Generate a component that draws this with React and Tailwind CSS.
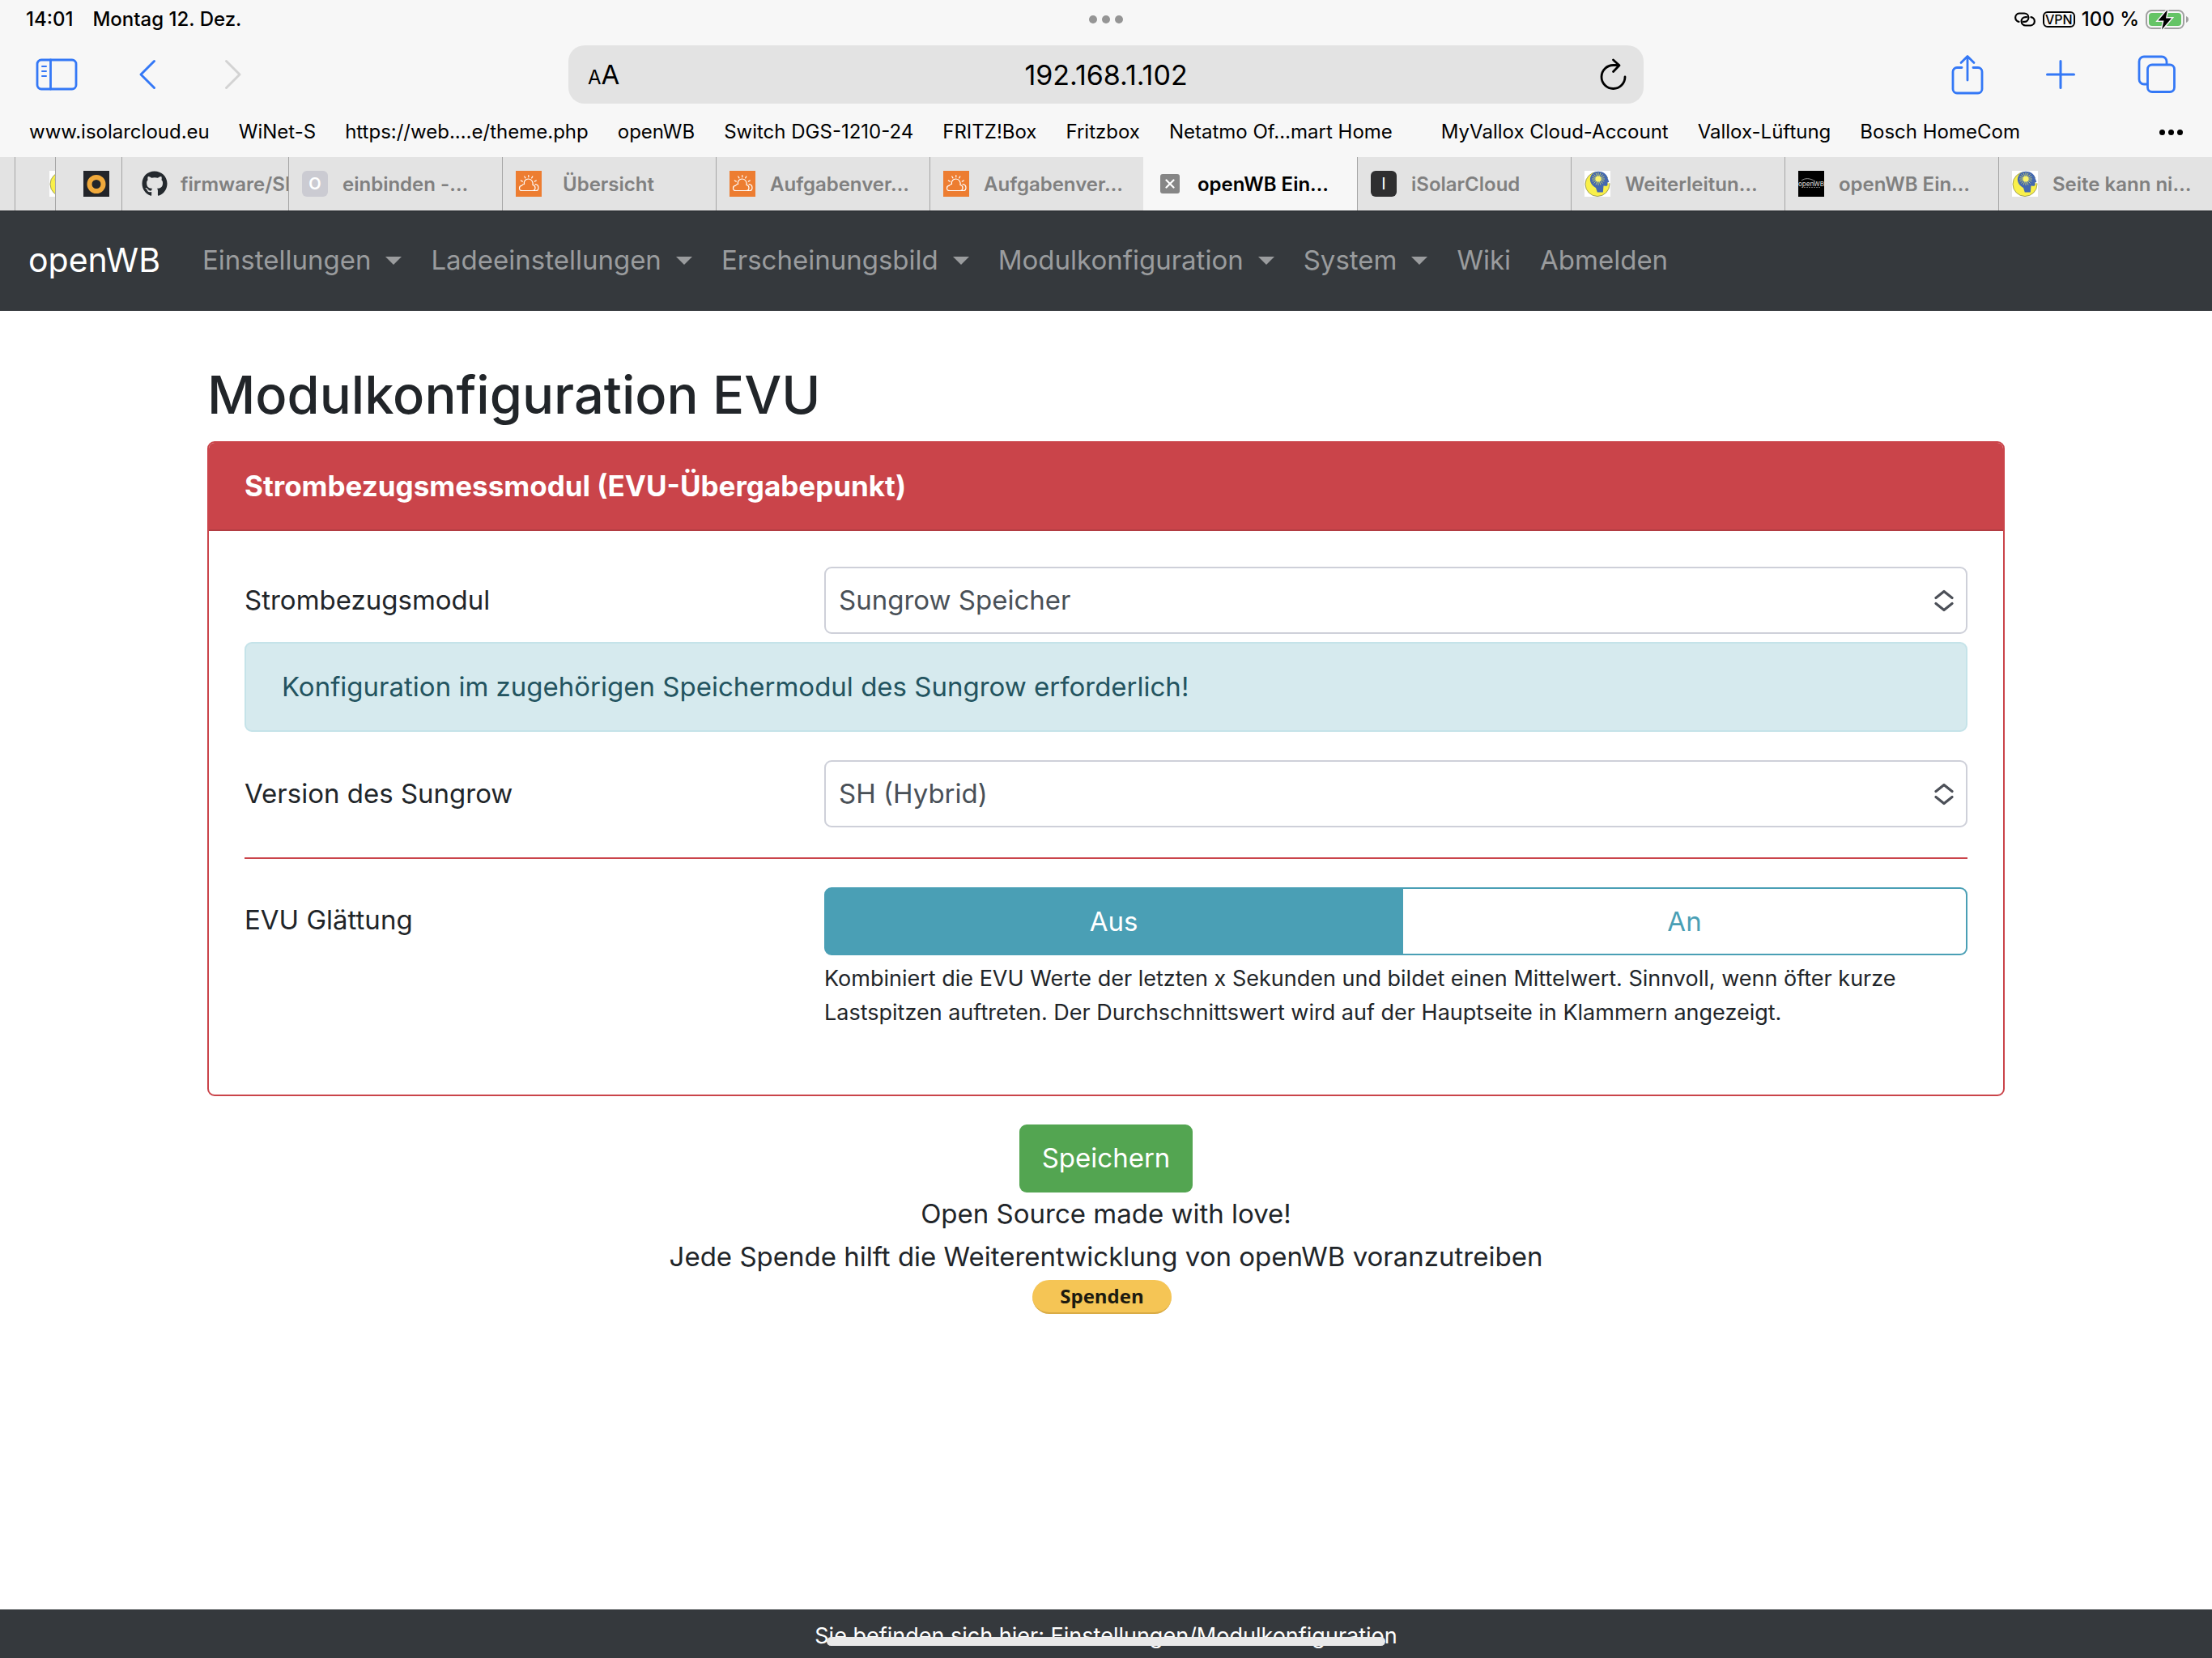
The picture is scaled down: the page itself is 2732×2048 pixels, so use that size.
import { useState } from "react";
import { FaGithub } from "react-icons/fa";

const bookmarks = [
  { label: "www.isolarcloud.eu" },
  { label: "WiNet-S" },
  { label: "https://web.…e/theme.php" },
  { label: "openWB" },
  { label: "Switch DGS-1210-24" },
  { label: "FRITZ!Box" },
  { label: "Fritzbox" },
  { label: "Netatmo Of…mart Home", wide: true },
  { label: "MyVallox Cloud-Account" },
  { label: "Vallox-Lüftung" },
  { label: "Bosch HomeCom" },
];

const menu = [
  { label: "Einstellungen", dropdown: true },
  { label: "Ladeeinstellungen", dropdown: true },
  { label: "Erscheinungsbild", dropdown: true },
  { label: "Modulkonfiguration", dropdown: true },
  { label: "System", dropdown: true },
  { label: "Wiki" },
  { label: "Abmelden" },
];

const SunHeadIcon = () => (
  <svg width="32" height="32" viewBox="0 0 32 32" className="shrink-0">
    <rect width="32" height="32" fill="#fff" />
    <circle cx="16" cy="16.500" r="15" fill="#f9f04a" stroke="#8a8a4a" strokeWidth="0.8" />
    <path d="M27 9 32 8.500V15l-3 .5Z" fill="#fff" />
    <path d="M7 9C8 4 12 .8 17 .8c6 0 10.500 3.500 11.500 8l1.800 5-2 .8.2 2.500c0 1.400-1 1.900-2.500 1.700l-2.500-.3-.7 8h-7L14 21C9.500 18.500 6 14 7 9Z" fill="#4468b0" />
    <g stroke="#d9dc62" strokeWidth="0.8">
      <path d="M17 2v16M9 10h16M11.400 4.400l11.200 11.200M22.600 4.400 11.400 15.600M14 2.600l6 14.800M20 2.600l-6 14.800M9.600 7l14.800 6M24.400 7 9.600 13" />
    </g>
    <circle cx="17" cy="10" r="3.600" fill="#fbf36a" />
  </svg>
);

const CloudIcon = () => (
  <svg width="32" height="32" viewBox="0 0 32 32" className="shrink-0" fill="none" stroke="#fff" strokeWidth="1.200" strokeLinecap="round" strokeLinejoin="round">
    <rect width="32" height="32" fill="#ed7d31" stroke="none" />
    <path d="M8 24.500h12.500c2.300 0 3.500-1.600 3.500-3.500s-1.500-3.300-3-3.500c.6-4-1.600-7.500-5.300-7.500s-6 3-5.200 6.500c-1.500 0-2.500.6-2.800 1.700-2 .3-3.200 1.500-3.200 3.200 0 1.900 1.500 3.100 3.500 3.100Z" />
    <path d="M20.500 24.500h4c2 0 3.500-1.500 3.500-3.600 0-2.400-1.600-4-3.900-4.200" />
    <path d="M15.800 5.500v2.200M10.800 7l1.100 1.900M20.800 7l-1.100 1.900M6.300 12l2 1.100M25.300 12l-2 1.100" />
  </svg>
);

const RingIcon = () => (
  <svg width="32" height="32" viewBox="0 0 32 32" className="shrink-0">
    <rect width="32" height="32" fill="#23252a" />
    <circle cx="16" cy="16.500" r="8.500" fill="none" stroke="#f0a93b" strokeWidth="6" />
  </svg>
);

const OpenWbIcon = () => (
  <span className="relative flex h-8 w-8 shrink-0 items-center justify-center bg-black text-[8px] leading-none font-medium text-[#c8c8c8]">
    openWB
    <svg width="32" height="32" viewBox="0 0 32 32" className="absolute inset-0" fill="none" stroke="#bdbdbd">
      <path d="M4 12c4-3 10-3.500 17 1" strokeWidth="0.800" />
      <path d="M4 20.500h24" strokeWidth="0.600" strokeDasharray="2 1" />
    </svg>
  </span>
);

const LetterIcon = ({ letter, className }) => (
  <span className={`flex h-8 w-8 shrink-0 items-center justify-center rounded-md text-[20px] leading-none ${className}`}>
    {letter}
  </span>
);

const tabs = [
  { label: "einbinden -…", icon: <LetterIcon letter="O" className="bg-[#cbcbd2] text-white" /> },
  { label: "Übersicht", icon: <CloudIcon />, short: true },
  { label: "Aufgabenver…", icon: <CloudIcon /> },
  { label: "Aufgabenver…", icon: <CloudIcon /> },
  { label: "openWB Ein…", active: true },
  { label: "iSolarCloud", icon: <LetterIcon letter="I" className="bg-[#2f2f30] font-normal text-white" /> },
  { label: "Weiterleitun…", icon: <SunHeadIcon /> },
  { label: "openWB Ein…", icon: <OpenWbIcon /> },
  { label: "Seite kann ni…", icon: <SunHeadIcon /> },
];

const StatusBar = () => (
  <div className="grid h-12 grid-cols-3 items-center px-8 text-[24px] leading-none font-medium">
    <div className="flex gap-6">
      <span>14:01</span>
      <span>Montag 12. Dez.</span>
    </div>
    <div className="flex justify-center gap-[6px]">
      <span className="h-[10px] w-[10px] rounded-full bg-[#959595]" />
      <span className="h-[10px] w-[10px] rounded-full bg-[#959595]" />
      <span className="h-[10px] w-[10px] rounded-full bg-[#959595]" />
    </div>
    <div className="-mr-1 flex items-center justify-end gap-2">
      <svg width="28" height="18" viewBox="0 0 28 18" fill="none" stroke="#000" strokeWidth="2.200" strokeLinecap="round">
        <path d="M6.500 11.800A5.200 5.200 0 0 1 6.800 1.500h6.400a5.200 5.200 0 0 1 0 10.400H12" />
        <path d="M21.500 6.200a5.200 5.200 0 0 1-.3 10.300h-6.400a5.200 5.200 0 0 1 0-10.400H16" />
      </svg>
      <span className="flex h-5 w-10 items-center justify-center rounded-[6px] border-2 border-black text-[16px] leading-none">VPN</span>
      <span>100 %</span>
      <svg width="54" height="34" viewBox="0 0 54 34">
        <rect x="1" y="6" width="46" height="22" rx="6.500" fill="none" stroke="#a0a0a0" strokeWidth="2" />
        <rect x="4" y="9" width="40" height="16" rx="4" fill="#65c466" />
        <path d="M50 13v8c2-.7 3-2.300 3-4s-1-3.300-3-4Z" fill="#a0a0a0" />
        <path d="M27 5 15.500 18.500h7L20 29.500 32 15.500h-7Z" fill="#000" stroke="#f7f7f7" strokeWidth="3" paintOrder="stroke" />
      </svg>
    </div>
  </div>
);

const Toolbar = () => (
  <div className="grid h-[88px] grid-cols-[1fr_1328px_1fr] items-center text-[#3478f6]">
    <div className="flex items-center pl-11">
      <button aria-label="Seitenleiste">
        <svg width="52" height="40" viewBox="0 0 52 40" fill="none" stroke="currentColor" strokeWidth="2.800" strokeLinecap="round">
          <rect x="2" y="2" width="48" height="36" rx="5" />
          <path d="M18.500 2v36" />
          <path d="M8 10h5M8 16h5M8 22h5" strokeWidth="2" />
        </svg>
      </button>
      <button aria-label="Zurück" className="ml-[74px]">
        <svg width="24" height="40" viewBox="0 0 24 40" fill="none" stroke="currentColor" strokeWidth="3" strokeLinecap="round" strokeLinejoin="round">
          <path d="M20.500 3.500 4 20l16.500 16.500" />
        </svg>
      </button>
      <button aria-label="Vorwärts" className="ml-[82px] text-[#d3d3d3]" disabled>
        <svg width="24" height="40" viewBox="0 0 24 40" fill="none" stroke="currentColor" strokeWidth="3" strokeLinecap="round" strokeLinejoin="round">
          <path d="M3.500 3.500 20 20 3.500 36.500" />
        </svg>
      </button>
    </div>
    <div className="flex h-[72px] items-center justify-between rounded-[20px] bg-[#e3e3e3] pr-[18px] pl-6 text-black">
      <button aria-label="Darstellung" className="w-12 text-left leading-none">
        <span className="text-[24px]">A</span>
        <span className="text-[33px]">A</span>
      </button>
      <input aria-label="Adresse" defaultValue="192.168.1.102" className="min-w-0 flex-1 bg-transparent text-center text-[34px] outline-none" />
      <button aria-label="Neu laden" className="flex w-[54px] justify-end">
        <svg width="38" height="40" viewBox="0 0 38 40" fill="none" stroke="currentColor" strokeWidth="2.800" strokeLinecap="round" strokeLinejoin="round">
          <path d="M33 23a14.500 14.500 0 1 1-14.500-14.500h6.500" />
          <path d="M18.500 2 26 8.700 18.500 16.500" />
        </svg>
      </button>
    </div>
    <div className="flex items-center justify-end pr-11">
      <button aria-label="Teilen">
        <svg width="40" height="50" viewBox="0 0 40 50" fill="none" stroke="currentColor" strokeWidth="2.800" strokeLinecap="round" strokeLinejoin="round">
          <path d="M13 16.500H7a5 5 0 0 0-5 5V43a5 5 0 0 0 5 5h26a5 5 0 0 0 5-5V21.500a5 5 0 0 0-5-5h-6M20 32V3M12 10.500 20 2.500l8 8" />
        </svg>
      </button>
      <button aria-label="Neuer Tab" className="ml-[76px]">
        <svg width="38" height="38" viewBox="0 0 38 38" fill="none" stroke="currentColor" strokeWidth="3" strokeLinecap="round">
          <path d="M19 2.500v33M2.500 19h33" />
        </svg>
      </button>
      <button aria-label="Tabübersicht" className="ml-[76px]">
        <svg width="48" height="48" viewBox="0 0 48 48" fill="none" stroke="currentColor" strokeWidth="2.800" strokeLinejoin="round">
          <path d="M12.500 36H8a6 6 0 0 1-6-6V8a6 6 0 0 1 6-6h22a6 6 0 0 1 6 6v4" />
          <rect x="12.500" y="12" width="33" height="33.500" rx="5.500" />
        </svg>
      </button>
    </div>
  </div>
);

const Bookmarks = () => (
  <nav className="flex h-[58px] items-center px-9 pb-1 text-[24px] leading-none whitespace-nowrap">
    {bookmarks.map((b) => (
      <a key={b.label} href="#" className={b.wide ? "mr-[60px]" : "mr-9"}>
        {b.label}
      </a>
    ))}
    <button aria-label="Mehr" className="ml-auto flex gap-1">
      <span className="h-[7px] w-[7px] rounded-full bg-black" />
      <span className="h-[7px] w-[7px] rounded-full bg-black" />
      <span className="h-[7px] w-[7px] rounded-full bg-black" />
    </button>
  </nav>
);

const TabBar = () => (
  <div className="flex h-[67px] border-b border-[#26292c] bg-[#e3e3e3] text-[24px] font-semibold whitespace-nowrap text-[#808080]">
    {/* tabs stacked at the left edge */}
    <div className="w-[18px] shrink-0" />
    <div className="flex w-[50px] shrink-0 items-center overflow-hidden border-l border-[#a5a5a5] pl-[42px]">
      <SunHeadIcon />
    </div>
    <div className="flex w-[82px] shrink-0 items-center border-l border-[#a5a5a5] pl-[34px]">
      <RingIcon />
    </div>
    <div className="flex w-[206px] shrink-0 items-center overflow-hidden border-l border-[#a5a5a5] pl-6">
      <FaGithub className="h-8 w-8 shrink-0 text-[#24292e]" />
      <span className="ml-4">firmware/SI</span>
    </div>
    <div className="grid flex-1 grid-cols-9">
      {tabs.map((tab, i) =>
        tab.active ? (
          <div key={i} className="flex items-center bg-[#f7f7f7] pl-[21px] text-black">
            <button aria-label="Tab schließen" className="flex h-6 w-6 shrink-0 items-center justify-center rounded-[3px] bg-[#868686]">
              <svg width="12" height="12" viewBox="0 0 12 12" stroke="#fff" strokeWidth="2.200" strokeLinecap="round">
                <path d="m1.500 1.500 9 9M10.500 1.500l-9 9" />
              </svg>
            </button>
            <span className="ml-[22px]">{tab.label}</span>
          </div>
        ) : (
          <div key={i} className="flex items-center border-l border-[#a5a5a5] pl-4">
            {tab.icon}
            <span className={tab.short ? "ml-[26px]" : "ml-[18px]"}>{tab.label}</span>
          </div>
        )
      )}
    </div>
  </div>
);

const NavBar = () => (
  <nav className="flex h-[123px] items-center bg-[#35393d] pb-0.5 pl-[35px]">
    <a href="#" className="mr-[52px] text-[41px] text-white">openWB</a>
    <ul className="flex items-center gap-9 text-[33px] text-[#9a9c9e]">
      {menu.map((item) => (
        <li key={item.label}>
          <a href="#" className="flex items-center gap-[18px]">
            {item.label}
            {item.dropdown && (
              <svg width="20" height="10" viewBox="0 0 20 10" fill="currentColor">
                <path d="M0 0h20L10 10Z" />
              </svg>
            )}
          </a>
        </li>
      ))}
    </ul>
  </nav>
);

const SelectRow = ({ id, label, options }) => (
  <div className="grid grid-cols-3 items-center gap-5">
    <label htmlFor={id}>{label}</label>
    <div className="relative col-span-2">
      <select id={id} className="block h-[83px] w-full appearance-none rounded-[9px] border-2 border-[#ced0d9] bg-white px-4 text-[#495057]">
        {options.map((o) => (
          <option key={o}>{o}</option>
        ))}
      </select>
      <svg width="24" height="28" viewBox="0 0 24 28" className="pointer-events-none absolute top-7 right-[17px]" fill="none" stroke="#4c5058" strokeWidth="3.200" strokeLinecap="round" strokeLinejoin="round">
        <path d="M2 10.500 12 2.500l10 8M2 17.500l10 8 10-8" />
      </svg>
    </div>
  </div>
);

const ToggleOption = ({ value, label, checked, onChange, className }) => (
  <label
    className={`flex cursor-pointer items-center justify-center border-2 border-[#4a9fb5] ${
      checked ? "bg-[#4a9fb5] text-white" : "bg-white text-[#4a9fb5]"
    } ${className}`}
  >
    <input type="radio" name="evuglaettung" value={value} checked={checked} onChange={() => onChange(value)} className="sr-only" />
    {label}
  </label>
);

export default function App() {
  const [smoothing, setSmoothing] = useState("0");

  return (
    <div className="flex min-h-screen flex-col bg-white font-['Inter',sans-serif] text-[33px] leading-[53px] text-[#212529]">
      <header className="bg-[#f7f7f7] text-black">
        <StatusBar />
        <Toolbar />
        <Bookmarks />
        <TabBar />
      </header>
      <NavBar />

      <main className="mx-auto w-full max-w-[2220px] flex-1 pt-[62px]">
        <h1 className="mb-[15px] text-[65px] leading-[84px] font-medium">Modulkonfiguration EVU</h1>

        <form onSubmit={(e) => e.preventDefault()}>
          <div className="overflow-hidden rounded-[9px] border-2 border-[#ca444a]">
            <div className="border-b-2 border-[#b23c42] bg-[#ca444a] px-11 py-[27px] text-[35px] font-bold text-white">
              Strombezugsmessmodul (EVU-Übergabepunkt)
            </div>
            <div className="px-11 pt-11 pb-20">
              <SelectRow id="modul" label="Strombezugsmodul" options={["Sungrow Speicher"]} />
              <div className="mt-[10px] mb-[35px] rounded-[9px] border-2 border-[#c5e3e9] bg-[#d6eaee] px-11 py-[27px] text-[#235460]">
                Konfiguration im zugehörigen Speichermodul des Sungrow erforderlich!
              </div>
              <SelectRow id="version" label="Version des Sungrow" options={["SH (Hybrid)"]} />
              <hr className="mt-[37px] mb-[35px] border-t-2 border-[#ca444a]" />
              <div className="grid grid-cols-3 gap-5">
                <span className="pt-[14px]">EVU Glättung</span>
                <div className="col-span-2">
                  <div className="flex h-[84px]">
                    <ToggleOption value="0" label="Aus" checked={smoothing === "0"} onChange={setSmoothing} className="w-[715px] rounded-l-[9px]" />
                    <ToggleOption value="1" label="An" checked={smoothing === "1"} onChange={setSmoothing} className="flex-1 rounded-r-[9px] border-l-0" />
                  </div>
                  <p className="mt-2 text-[27px] leading-[42px]">
                    Kombiniert die EVU Werte der letzten x Sekunden und bildet einen Mittelwert. Sinnvoll, wenn öfter kurze
                    Lastspitzen auftreten. Der Durchschnittswert wird auf der Hauptseite in Klammern angezeigt.
                  </p>
                </div>
              </div>
            </div>
          </div>

          <div className="mt-[35px] flex justify-center">
            <button className="h-[84px] rounded-[9px] bg-[#53a551] px-7 pb-0.5 text-white">Speichern</button>
          </div>
        </form>

        <div className="flex flex-col items-center text-center">
          <p>Open Source made with love!</p>
          <p>Jede Spende hilft die Weiterentwicklung von openWB voranzutreiben</p>
          <button className="mt-0.5 mr-[10px] h-[42px] w-[172px] rounded-full border-b-2 border-[#d9ab45] bg-[#f5c555] font-['Open_Sans',sans-serif] text-[24px] leading-none font-bold text-[#1c1a10]">
            Spenden
          </button>
        </div>
      </main>

      <footer className="relative h-[60px] overflow-hidden bg-[#35393d] pt-[6px] text-center text-[27px] text-white">
        Sie befinden sich hier: Einstellungen/Modulkonfiguration
        <div className="absolute bottom-[15px] left-1/2 h-[11px] w-[690px] -translate-x-1/2 rounded-full bg-[#e9e9e9]" />
      </footer>
    </div>
  );
}
